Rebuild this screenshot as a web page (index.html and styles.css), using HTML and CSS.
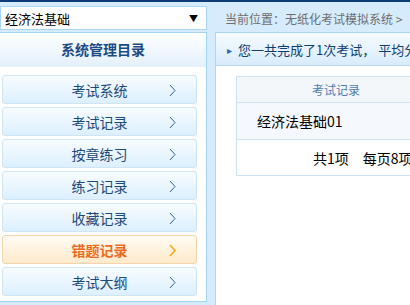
FILE: index.html
```html
<!DOCTYPE html>
<html lang="zh-CN">
<head>
    <meta charset="UTF-8">
    <title>无纸化考试模拟系统</title>
    <link rel="stylesheet" href="styles.css">
</head>
<body>
    <div class="topbar"></div>
    <div class="header">
        <div class="select-box">
            <span>经济法基础</span>
            <span class="select-arrow">▼</span>
        </div>
        <div class="breadcrumb">当前位置：无纸化考试模拟系统 &gt;</div>
    </div>

    <div class="main">
        <div class="sidebar">
            <div class="sidebar-title">系统管理目录</div>
            <ul class="menu">
                <li class="menu-item"><span></span><span class="menu-text">考试系统</span><svg class="chevron" width="7" height="13" viewBox="0 0 7 13"><polyline points="1,1 6,6.5 1,12"/></svg></li>
                <li class="menu-item"><span></span><span class="menu-text">考试记录</span><svg class="chevron" width="7" height="13" viewBox="0 0 7 13"><polyline points="1,1 6,6.5 1,12"/></svg></li>
                <li class="menu-item"><span></span><span class="menu-text">按章练习</span><svg class="chevron" width="7" height="13" viewBox="0 0 7 13"><polyline points="1,1 6,6.5 1,12"/></svg></li>
                <li class="menu-item"><span></span><span class="menu-text">练习记录</span><svg class="chevron" width="7" height="13" viewBox="0 0 7 13"><polyline points="1,1 6,6.5 1,12"/></svg></li>
                <li class="menu-item"><span></span><span class="menu-text">收藏记录</span><svg class="chevron" width="7" height="13" viewBox="0 0 7 13"><polyline points="1,1 6,6.5 1,12"/></svg></li>
                <li class="menu-item active"><span></span><span class="menu-text">错题记录</span><svg class="chevron" width="7" height="13" viewBox="0 0 7 13"><polyline points="1,1 6,6.5 1,12"/></svg></li>
                <li class="menu-item"><span></span><span class="menu-text">考试大纲</span><svg class="chevron" width="7" height="13" viewBox="0 0 7 13"><polyline points="1,1 6,6.5 1,12"/></svg></li>
            </ul>
        </div>

        <div class="content">
            <div class="notice">
                <span class="notice-mark">▸</span>
                <span>您一共完成了1次考试，&nbsp;平均分为80分</span>
            </div>
            <table class="records">
                <tr><th>考试记录</th></tr>
                <tr class="row-name"><td>经济法基础01</td></tr>
                <tr class="row-pager"><td>共1项　每页8项</td></tr>
            </table>
        </div>
    </div>
</body>
</html>
```

FILE: styles.css
```css
html, body {
    margin: 0;
    padding: 0;
    overflow: hidden;
}
body {
    width: 410px;
    height: 305px;
    background-color: #d6ebfc;
    font-family: "Noto Sans CJK SC", "Liberation Sans", sans-serif;
    color: #1c4a7a;
}
.topbar {
    height: 2px;
    background-color: #0d3b78;
}
.header {
    display: flex;
    align-items: center;
    height: 30px;
}
.select-box {
    box-sizing: border-box;
    width: 207px;
    height: 24px;
    margin-top: 2px;
    padding: 0 8px 0 4px;
    display: flex;
    align-items: center;
    justify-content: space-between;
    background-color: #fff;
    border: 1px solid #a9d6f6;
    font-size: 13px;
    color: #000;
}
.select-arrow {
    font-size: 9px;
    color: #000;
}
.breadcrumb {
    margin-left: 18px;
    margin-top: 2px;
    font-size: 12px;
    color: #6e6e6e;
    white-space: nowrap;
}
.main {
    display: flex;
    gap: 8px;
}
.sidebar {
    box-sizing: border-box;
    flex: none;
    width: 207px;
    height: 270px;
    background-color: #fff;
    border: 1px solid #a3d3f5;
    border-left: none;
}
.sidebar-title {
    height: 33px;
    line-height: 33px;
    text-align: center;
    font-size: 14px;
    font-weight: bold;
    color: #1b4b86;
    background: linear-gradient(#ffffff, #e3f0fb);
    border-bottom: 1px solid #e6f1fa;
}
.menu {
    list-style: none;
    margin: 0;
    padding: 8px 0 0 2px;
}
.menu-item {
    box-sizing: border-box;
    width: 195px;
    height: 29px;
    margin-bottom: 3px;
    display: grid;
    grid-template-columns: 1fr auto 1fr;
    align-items: center;
    border: 1px solid #cfe5f6;
    border-radius: 3px;
    background: linear-gradient(#f8fcff, #dcefff);
    font-size: 14px;
    color: #1c4a7a;
}
.menu-text {
    white-space: nowrap;
}
.chevron {
    justify-self: end;
    margin-right: 20px;
    margin-top: 2px;
    fill: none;
    stroke: #2f5ea8;
    stroke-width: 1;
}
.menu-item.active {
    border-color: #f3d4ab;
    background: linear-gradient(#fffbf3, #ffeacb);
    color: #ef6a1c;
    font-weight: bold;
}
.menu-item.active .chevron {
    stroke: #f6a51c;
    stroke-width: 1.6;
}
.content {
    box-sizing: border-box;
    flex: none;
    width: 195px;
    height: 273px;
    overflow: hidden;
    background-color: #fff;
    border: 1px solid #a6d5f6;
    border-right: none;
    border-bottom: none;
}
.notice {
    height: 32px;
    display: flex;
    align-items: center;
    padding-left: 11px;
    background: linear-gradient(#f6fbff, #d8ebfb);
    border-bottom: 1px solid #b8dbf5;
    font-size: 13px;
    color: #0c3e6e;
    white-space: nowrap;
}
.notice-mark {
    font-size: 10px;
    color: #2a63b8;
    margin-right: 6px;
}
.records {
    margin: 10px 0 0 20px;
    width: 200px;
    border-collapse: collapse;
    border: 1px solid #cde3f4;
}
.records th {
    height: 25px;
    padding: 0;
    font-weight: normal;
    font-size: 12px;
    color: #4f7ab2;
    background-color: #f4f7fa;
    border-bottom: 1px solid #cde3f4;
}
.records td {
    padding: 0;
    font-size: 14px;
    color: #000;
    white-space: nowrap;
}
.row-name td {
    height: 36px;
    padding-left: 20px;
    background-color: #f5f9fe;
    border-bottom: 1px solid #cde3f4;
}
.row-pager td {
    height: 35px;
    padding-left: 76px;
    background-color: #fff;
}
```
